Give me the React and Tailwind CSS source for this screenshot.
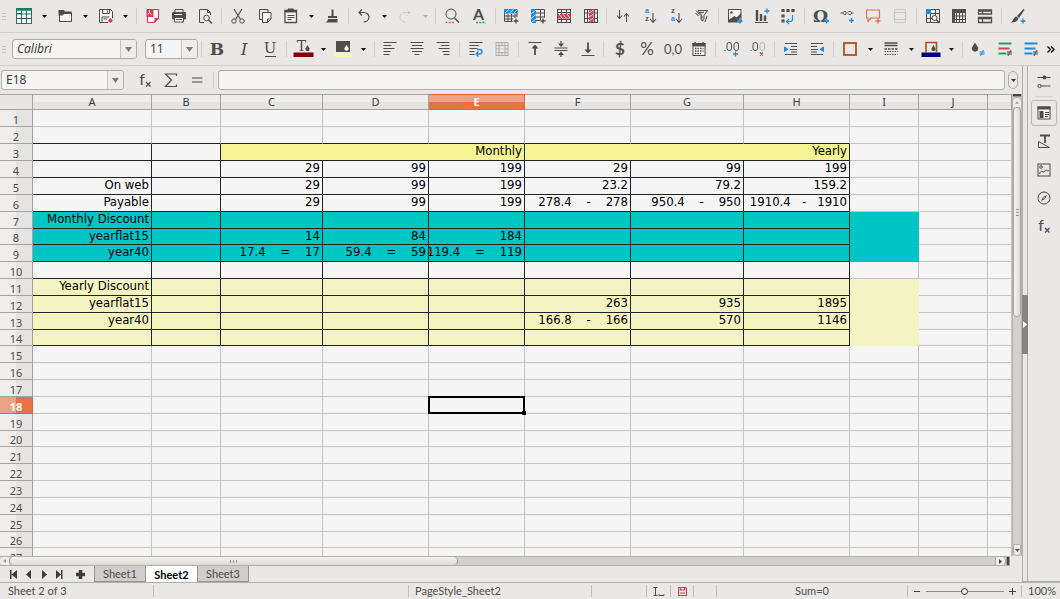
import React from "react";

const DARK = "#4d4d4d";
const BLUE = "#1e8bdf";
const RED = "#da3d52";

const S = ({ children, w = 16, h = 16, box = "0 0 16 16" }) => (
  <svg width={w} height={h} viewBox={box} fill="none" stroke={DARK} strokeWidth="1" className="shrink-0 overflow-visible" aria-hidden="true">
    {children}
  </svg>
);

const Plus = ({ x = 13, y = 13, c = BLUE }) => <path d={`M${x - 2.5} ${y}h5M${x} ${y - 2.5}v5`} stroke={c} strokeWidth="1.3" />;
const Glyph = ({ x = 8, y, size, c = DARK, weight = 400, family = "Lato, sans-serif", italic, children }) => (
  <text x={x} y={y} fontSize={size} fill={c} stroke="none" textAnchor="middle" fontWeight={weight} fontStyle={italic ? "italic" : "normal"} fontFamily={family}>{children}</text>
);
const SERIF = "DejaVu Serif, serif";

const icons = {
  sheet: (
    <>
      <g stroke="#12805c">
        <rect x=".5" y=".5" width="15" height="15" fill="#fff" />
        <path d="M1 1.500h14" strokeWidth="2.500" />
        <path d="M.5 6h15M5.500 3v12M10.500 3v12" strokeWidth="1.200" />
      </g>
      <path d="M1 10.500h14M1 5.500h4" stroke={DARK} />
    </>
  ),
  open: (
    <>
      <path d="M2.500 3.500v10h12v-9" fill="#f4f4f4" />
      <path d="M1.500 5.500V2H7l1 1.500h6.500V6H7L5.500 7.500H1.500z" fill={DARK} stroke="none" />
      <path d="M2.500 6.500v7h12v-8" />
    </>
  ),
  save: (
    <>
      <path d="M1.500 1.500h11l2 2v11h-13z" fill="#f8f8f8" />
      <path d="M4.500 1.500v4h7v-4M4 14v-5h7.500M9.500 2.500v2M5.500 11h4" />
      <circle cx="12.500" cy="12.500" r="2.600" fill={RED} stroke="#f8f8f8" />
    </>
  ),
  pdf: (
    <>
      <path d="M8 1.500h5.500V10l-4 4.500h-7V9" fill="#fff" stroke={RED} strokeWidth="1.200" />
      <path d="M9.500 15v-5h4.500z" fill={RED} stroke="none" />
      <rect x="1.500" y="1" width="7" height="8" fill={RED} stroke="none" />
      <path d="M4.500 2.500v2.500M3 6.500l1.500-2 2 2" stroke="#fff" />
    </>
  ),
  print: (
    <>
      <path d="M4 4V1.500h8V4" />
      <path d="M1.500 4.500h13V11h-2V9h-9v2h-2z" fill={DARK} />
      <path d="M3 6.500h8" stroke="#fff" />
      <path d="M3.500 9.500h9v4.500h-9zM5 11.500h6" fill="#fff" />
    </>
  ),
  preview: (
    <>
      <path d="M13.500 7V4.500l-3-3h-8v13H7M10.500 1.500v3h3" />
      <circle cx="9.500" cy="10" r="2.800" />
      <path d="M11.500 12l3.500 3.500" strokeWidth="1.500" />
    </>
  ),
  cut: (
    <>
      <path d="M4 1l6.500 10.500M12 1L5.500 11.500" strokeWidth="1.200" />
      <circle cx="4" cy="13" r="2.200" />
      <circle cx="12" cy="13" r="2.200" />
    </>
  ),
  copy: (
    <>
      <path d="M11 4V1.500H2.500v10H5" />
      <path d="M5.500 4.500h8.500V11l-3.500 3.500h-5z" fill="#f4f4f4" />
      <path d="M10.500 14.500V11H14" />
    </>
  ),
  paste: (
    <>
      <path d="M2 2.500h11.500v12H2z" fill="#f4f4f4" strokeWidth="1.300" />
      <path d="M1.500 2h12.500v2.500H1.500z" fill={DARK} stroke="none" />
      <path d="M5 1h5.500v2H5z" fill={DARK} />
      <path d="M4.500 7.500h7M4.500 9.500h7M4.500 11.500h4" />
    </>
  ),
  brush: (
    <>
      <path d="M8.500 1.500v6.500" strokeWidth="2" />
      <path d="M4 8h9v2H4zM4 11h9.500v3.500H.500c2 0 3.500-2 3.500-3.500z" fill={DARK} stroke="none" />
    </>
  ),
  undo: <path d="M6 1.500L3 4.500l3 3M3 4.500h4.500c8 0 6.500 9.500 0 9.500" strokeWidth="1.200" />,
  redo: <path d="M10 1.500l3 3-3 3M13 4.500H8.500c-8 0-6.500 9.500 0 9.500" stroke="#c2c1bf" strokeDasharray="2 .6" />,
  find: (
    <>
      <circle cx="7" cy="6" r="5" />
      <path d="M10.500 10l4.500 4.500" strokeWidth="1.500" />
      <path d="M1.500 14.500h9" stroke="#e8604c" strokeWidth="1.500" strokeDasharray="2 1.200" />
    </>
  ),
  spell: (
    <>
      <Glyph x={7.500} y={12} size={16} weight={700}>A</Glyph>
      <path d="M5 14.500h10" stroke="#18a058" strokeWidth="1.500" strokeDasharray="2 1.200" />
    </>
  ),
  rowAdd: (
    <>
      <path d="M1.500 4v9.500h8M1 8h13M5 6v7.500M8.500 6v7.500M12 6v4M1 11h9M14 1v8" />
      <path d="M1 1h13.500v4.500H1z" fill={BLUE} stroke="none" />
      <path d="M2 5l4-3.500M6.500 5l4-3.500M11 5l3.500-3.500" stroke="#cfe6f8" />
      <Plus x={13} y={13} c={DARK} />
    </>
  ),
  colAdd: (
    <>
      <path d="M6 1.500h8.500v8M6 5h8.500M6 9h8.500M6 12.500h4M10.500 1.500v11" />
      <path d="M1 1h5v14H1z" fill={BLUE} stroke="none" />
      <path d="M1 6l5-4M1 10.500l5-4M1 15l5-4" stroke="#cfe6f8" />
      <Plus x={13} y={13} c={DARK} />
    </>
  ),
  rowDel: (
    <>
      <rect x="1.500" y="1.500" width="13" height="13" />
      <path d="M1 4.500h14M1 11.500h14M5.500 1v14M10.500 1v14" />
      <path d="M2 6h12v4.500H2z" fill={RED} stroke="none" />
      <path d="M3 6l3.500 4.500M7 6l3.500 4.500M11 6l3 4" stroke="#fbd5da" />
    </>
  ),
  colDel: (
    <>
      <rect x="1.500" y="1.500" width="13" height="13" />
      <path d="M1 5h14M1 10.500h14M4.500 1v14M11.500 1v14" />
      <path d="M6 2h4.500v12H6z" fill={RED} stroke="none" />
      <path d="M6 5l4.500-3M6 9l4.500-3M6 13l4.500-3" stroke="#fbd5da" />
    </>
  ),
  sort: <path d="M4.500 2v8M2 7.500l2.500 3 2.500-3M11.500 14V5.500M9 8.500l2.500-3 2.500 3" strokeWidth="1.100" />,
  sortAsc: (
    <>
      <Glyph x={5} y={5} size={7} c={BLUE} weight={700} family="Liberation Sans, sans-serif">a</Glyph>
      <Glyph x={5} y={13} size={7} weight={700} family="Liberation Sans, sans-serif">z</Glyph>
      <path d="M11 5v9M8 11l3 3.500 3-3.500" strokeWidth="1.100" />
    </>
  ),
  sortDesc: (
    <>
      <Glyph x={5} y={5} size={7} weight={700} family="Liberation Sans, sans-serif">z</Glyph>
      <Glyph x={5} y={13} size={7} c={BLUE} weight={700} family="Liberation Sans, sans-serif">a</Glyph>
      <path d="M11 5v9M8 11l3 3.500 3-3.500" strokeWidth="1.100" />
    </>
  ),
  filter: (
    <>
      <path d="M4 2.500h9.500L10 7.500v4L8 13V8z" />
      <path d="M2 2.500l5 5v4M1.500 5l3 3M5 4.500h5" />
      <path d="M13 8l-2 6" />
    </>
  ),
  image: (
    <>
      <rect x="1.500" y="1.500" width="12.500" height="12.500" fill="#f4f4f4" />
      <path d="M1.500 14V12l6-4 2 1.500L14 5v4l-4 5z" fill={DARK} stroke="none" />
      <circle cx="4.500" cy="4.500" r="1.200" fill={DARK} stroke="none" />
      <Plus />
    </>
  ),
  chart: (
    <>
      <path d="M3 2v11M7 6v7M11 7.500v5.500" strokeWidth="2.400" />
      <path d="M1 14.500h13" />
      <Plus x={13} y={3} />
    </>
  ),
  pivot: (
    <>
      <path d="M2 1.500h2v2h-2zM7 1.500h2v2h-2zM12 1.500h2v2h-2zM2 7h2v2h-2zM2 12h2v2h-2z" fill="#666" strokeWidth="1.200" />
      <path d="M12.500 7v4c0 1.500-1 2.500-2 2.500H7M9 11l-2.500 2.500L9 16" stroke={BLUE} strokeWidth="1.200" />
    </>
  ),
  omega: (
    <>
      <Glyph x={7.500} y={14} size={17} weight={700} family="DejaVu Serif, serif">Ω</Glyph>
      <Plus x={13.500} y={13} />
    </>
  ),
  link: (
    <>
      <path d="M1.500 5h2M7 3.500H5.500c-2 0-2 3 0 3H7M6.500 5h3M9.500 3.500H11c2 0 2 3 0 3H9.500M12.500 5h2" />
      <Plus x={12.500} y={12.500} />
    </>
  ),
  comment: (
    <>
      <path d="M1.500 2h13v8H6l-3 3.500V10H1.500z" stroke="#ee6a4c" strokeWidth="1.200" />
      <Plus x={13} y={13} c="#ee6a4c" />
    </>
  ),
  header: <path d="M2.500 1.500h11v13h-11zM3 4.500h10M3 11.500h10" stroke="#c9c8c6" />,
  area: (
    <>
      <rect x="1.500" y="1.500" width="13" height="13" />
      <path d="M5.500 1v14M10.500 1v8M1 5.500h14M1 10.500h6" />
      <path d="M1 1h5v5H1z" fill={BLUE} stroke="none" />
      <circle cx="9.500" cy="10" r="2.500" fill="#f4f4f4" />
      <path d="M11.500 12l3 3" strokeWidth="1.400" />
    </>
  ),
  freeze: (
    <>
      <rect x="1.500" y="1.500" width="13" height="13" />
      <path d="M5.500 1v14M8.500 1v14M11.500 1v14M1 8h14M1 11.500h14" />
      <path d="M1 1h14v4H1zM1 1h3v14H1z" fill={DARK} stroke="none" />
    </>
  ),
  split: <path d="M1.500 2h13v4h-13zM1.500 9.500h13v5h-13zM1.500 3h13M1.500 10.500h13M5.500 2v4M5.500 10v4.500" strokeWidth="1.300" />,
  draw: (
    <>
      <path d="M13.500 1L7 8l2 2L14.500 2zM6.500 8.500c-2 .5-3 2-3.500 3.500-.5 1-1.500 2-2.500 2.500 4 .5 7-1 8-4z" fill={DARK} stroke="none" />
      <Plus x={13} y={13} />
    </>
  ),
  bold: <Glyph y={14} size={17} weight={700} family={SERIF}>B</Glyph>,
  italic: <Glyph y={14} size={17} italic family={SERIF}>I</Glyph>,
  underline: (
    <>
      <Glyph y={12} size={15} family={SERIF}>U</Glyph>
      <path d="M3 15.500h11" />
    </>
  ),
  fontColor: (
    <>
      <Glyph x={6.500} y={10} size={14} family={SERIF}>T</Glyph>
      <path d="M12.500 4l2 3.500c.5 3.500-4.500 3.500-4 0z" fill={DARK} stroke="none" />
      <path d="M-1.500 11.500h20v4.500h-20z" fill="#840000" stroke="none" />
    </>
  ),
  highlight: (
    <>
      <path d="M1 0h14v11H1z" fill={DARK} stroke="none" />
      <path d="M11.500 4l2 3c1 3.500-5 3.500-4 0z" fill="#fff" stroke="none" />
      <path d="M-1.500 11.500h19v4.500h-19z" fill="#f3f3c0" stroke="none" />
    </>
  ),
  left: <path d="M1.500 1.500h13M1.500 4.500h8M1.500 7.500h11M1.500 10.500h7M1.500 13.500h6" strokeWidth="1.100" />,
  center: <path d="M1.500 1.500h13M3 4.500h10M1.500 7.500h13M3 10.500h10M5.500 13.500h5" strokeWidth="1.100" />,
  right: <path d="M1.500 1.500h13M6.500 4.500h8M3.500 7.500h11M7.500 10.500h7M8.500 13.500h6" strokeWidth="1.100" />,
  wrap: (
    <>
      <path d="M1.500 1.500h13M1.500 4.500h9M1.500 7.500h8M1.500 10.500h5M1.500 13.500h5" />
      <path d="M9 8.500h2.500c3.500 0 3.500 4.500 0 4.500H9M10.500 10.500L8 13l2.500 2.500" stroke={BLUE} strokeWidth="1.300" />
    </>
  ),
  merge: (
    <g stroke="#b0afad">
      <rect x="2" y="1.500" width="12" height="13" />
      <path d="M2 4.500h12M2 11.500h12M5 1.500v13M11 1.500v13M8 1.500v3M8 11.500v3M2 8h3M11 8h3" />
      <path d="M5.500 8h5" strokeDasharray="1 1" />
    </g>
  ),
  top: <><path d="M1.500 1.500h13" /><path d="M8 14V6" strokeWidth="1.800" /><path d="M4.500 7.500L8 3.500l3.500 4z" fill={DARK} stroke="none" /></>,
  middle: (
    <>
      <path d="M1.500 7h13M1.500 9.500h13M8 0v3M8 16v-3" strokeWidth="1.200" />
      <path d="M5 2.500h6L8 6zM5 14h6l-3-3.500z" fill={DARK} stroke="none" />
    </>
  ),
  bottom: <><path d="M1.500 14.500h13" /><path d="M8 1.500v8" strokeWidth="1.800" /><path d="M4.500 8.500L8 12.500l3.500-4z" fill={DARK} stroke="none" /></>,
  currency: <Glyph y={14} size={17} weight={700}>$</Glyph>,
  percent: <Glyph y={14} size={17}>%</Glyph>,
  number: <Glyph y={13} size={13}>0,0</Glyph>,
  date: (
    <>
      <rect x="2" y="2.500" width="12" height="12" fill="#f8f8f8" />
      <path d="M1.500 2h13v3.500h-13z" fill={DARK} stroke="none" />
      <path d="M4 1v2M12 1v2" strokeWidth="1.500" />
      <path d="M4 7.500h8.500M4 10h8.500M4 12.500h6" strokeWidth="1.500" strokeDasharray="1.500 1" />
    </>
  ),
  addDec: (
    <>
      <rect x="3" y="1.500" width="4.500" height="8" rx="2.200" />
      <rect x="10" y="1.500" width="4.500" height="8" rx="2.200" />
      <path d="M1 9v1" />
      <Plus x={11.500} y={13} />
    </>
  ),
  delDec: (
    <>
      <rect x="3" y="1.500" width="4.500" height="8" rx="2.200" />
      <rect x="10" y="1.500" width="4.500" height="8" rx="2.200" stroke="#b8b7b5" />
      <path d="M1 9v1" />
      <path d="M10 11.500l3 3M13 11.500l-3 3" stroke={RED} strokeWidth="1.200" />
    </>
  ),
  indent: (
    <>
      <path d="M2 2.500h12M8 5.500h6M7 8.500h7M8 11h6M2 13.500h12" strokeWidth="1.200" />
      <path d="M1.500 6v4.500l3.500-2.200z" fill={BLUE} stroke={BLUE} />
    </>
  ),
  outdent: (
    <>
      <path d="M2 2.500h12M2 5.500h6M2 8.500h7M2 11h6M2 13.500h12" strokeWidth="1.200" />
      <path d="M14.500 6v4.500L11 8.300z" fill={BLUE} stroke={BLUE} />
    </>
  ),
  borders: <rect x="2" y="2" width="12" height="12" stroke="#b0511c" strokeWidth="1.800" />,
  lineStyle: (
    <>
      <path d="M1.500 2h13M1.500 4.500h13" strokeWidth="1.300" />
      <path d="M1.500 8h13" strokeWidth="1.300" strokeDasharray="2.500 1" />
      <path d="M1.500 10.500h13M1.500 13.500h13" strokeDasharray="1.500 1" />
    </>
  ),
  lineColor: (
    <>
      <path d="M3 11V1.500h10.500V11" stroke="#b0511c" strokeWidth="1.600" />
      <path d="M10.500 4l2 3.500c.5 3.500-4.500 3.500-4 0z" fill={DARK} stroke="none" />
      <path d="M-1.500 11.500h19v4.500h-19z" fill="#00007c" stroke="none" />
    </>
  ),
  drop: (
    <>
      <path d="M5 1.500l3 5c1.500 5.500-7.500 5.500-6 0z" fill={DARK} stroke="none" />
      <path d="M9.500 11h5M9.500 13h5M13.500 9l-3 6" stroke={BLUE} />
    </>
  ),
  styleRed: (
    <>
      <path d="M1.500 2.500h13" stroke="#1ba462" strokeWidth="2" />
      <path d="M1.500 7.500h11" stroke={RED} strokeWidth="2" />
      <path d="M1.500 12.500h8" stroke="#1ba462" strokeWidth="2" />
      <path d="M10 11h5M10 13h5M14 9l-3 6" />
    </>
  ),
  styleBlue: (
    <>
      <path d="M1.500 2.500h13M1.500 7.500h11M1.500 12.500h8" stroke={BLUE} strokeWidth="2" />
      <path d="M10 11h5M10 13h5M14 9l-3 6" />
    </>
  ),
  settings: (
    <>
      <path d="M1.500 3.500h13M5 12h9.500" />
      <circle cx="8.500" cy="3.500" r="2" fill={DARK} stroke="none" />
      <circle cx="3.500" cy="12" r="1.600" />
    </>
  ),
  props: (
    <>
      <rect x="2" y="2" width="12" height="12" fill="#f8f8f8" />
      <path d="M1.500 1.500h13v3h-13zM3.500 6h4v7h-4z" fill={DARK} stroke="none" />
      <path d="M9 7.500h4M9 9.500h4M9 11.500h3" />
    </>
  ),
  styles: (
    <>
      <path d="M4 1.500h10M9 1.500V9" strokeWidth="1.800" />
      <path d="M2.500 7.500v6h11z" />
    </>
  ),
  gallery: (
    <>
      <rect x="2" y="2" width="12" height="12" />
      <circle cx="5" cy="5" r="1.300" />
      <path d="M3.500 12c1-3 2-3 3.500-2s2-2 3-2 1 1.500 3 .5" />
    </>
  ),
  navigator: (
    <>
      <circle cx="8" cy="8" r="6" />
      <path d="M11 5L9 9l-4 2 2-4z" fill={DARK} stroke="none" />
      <circle cx="8" cy="8" r=".8" fill="#fff" stroke="none" />
    </>
  ),
  fx: (
    <>
      <Glyph x={5} y={13} size={16}>f</Glyph>
      <path d="M9 10l4.500 4.500M13.500 10L9 14.500" strokeWidth="1.200" />
    </>
  ),
  sum: <path d="M13.500 4V2H2.500l6 6-6 6.500h11v-2" strokeWidth="1.200" />,
  equals: <path d="M3 6h10.500M3 10h10.500" strokeWidth="1.100" />,
};

const label = {
  sheet: "New", open: "Open", save: "Save", pdf: "Export as PDF", print: "Print", preview: "Print Preview",
  cut: "Cut", copy: "Copy", paste: "Paste", brush: "Clone Formatting", fx: "Functions", sum: "Sum", equals: "Formula",
};

const IconButton = ({ name }) => (
  <button type="button" aria-label={label[name] || name} className="flex h-6 w-[26px] shrink-0 items-center justify-center">
    <S>{icons[name]}</S>
  </button>
);

const Caret = ({ off }) => (
  <button type="button" aria-label="More options" className="flex h-6 w-[14px] shrink-0 items-center justify-center">
    <svg width="5" height="3" viewBox="0 0 5 3" aria-hidden="true"><path d="M0 0h5L2.500 3z" fill={off ? "#b5b4b2" : "#111"} /></svg>
  </button>
);

const Sep = () => (
  <div className="flex h-4 w-[6px] shrink-0 justify-center"><div className="w-px bg-[#d0cfcd]" /></div>
);

const Items = ({ list }) =>
  list.split(" ").map((n, i) =>
    n === "|" ? <Sep key={i} /> : n === "v" ? <Caret key={i} /> : n === "x" ? <Caret key={i} off /> : <IconButton key={i} name={n} />
  );

const Handle = () => (
  <div className="flex w-[11px] shrink-0 flex-col gap-[2px] pl-[2px]">
    <div className="h-px w-1 bg-[#c4c3c1]" /><div className="h-px w-1 bg-[#c4c3c1]" /><div className="h-px w-1 bg-[#c4c3c1]" />
  </div>
);

const Combo = ({ id, title, value, box, text }) => (
  <div className={`flex h-5 shrink-0 rounded-[3px] border border-[#b1aca6] bg-[#f5f5f4] ${box}`}>
    <label htmlFor={id} className="sr-only">{title}</label>
    <input id={id} defaultValue={value} className={`min-w-0 flex-1 bg-transparent text-[12px] leading-[18px] text-[#3c3c3c] outline-none ${text}`} />
    <button type="button" aria-label={`${title} list`} className="flex w-4 items-center justify-center rounded-r-[2px] border-l border-[#c5c2be] bg-[#eeedeb]">
      <svg width="7" height="5" viewBox="0 0 7 5" aria-hidden="true"><path d="M0 0h7L3.500 5z" fill="#7a7a78" /></svg>
    </button>
  </div>
);

const BLACK_B = "border-b-[#222]";
const BLACK_R = "border-r-[#222]";
const LETTERS = ["A", "B", "C", "D", "E", "F", "G", "H", "I", "J", ""];
const data = {
  4: ["", "", "29", "99", "199", "29", "99", "199"],
  5: ["On web", "", "29", "99", "199", "23.2", "79.2", "159.2"],
  6: ["Payable", "", "29", "99", "199", "278.4    -    278", "950.4    -    950", "1910.4   -   1910"],
  7: ["Monthly Discount"],
  8: ["yearflat15", "", "14", "84", "184"],
  9: ["year40", "", "17.4    =    17", "59.4    =    59", "119.4    =    119"],
  11: ["Yearly Discount"],
  12: ["yearflat15", "", "", "", "", "263", "935", "1895"],
  13: ["year40", "", "", "", "", "166.8    -    166", "570", "1146"],
};
const SHORT_ROWS = [8, 14, 20, 26];

function Cell({ row, col }) {
  const value = (data[row] || [])[col] || "";
  const boxed = row >= 3 && row <= 14 && col <= 7;
  const teal = row >= 7 && row <= 9 && col <= 8;
  const pale = row >= 11 && row <= 14 && col <= 8;
  const bg = teal ? "bg-[#00c5c5]" : pale ? "bg-[#f4f4c3]" : "bg-[#f5f5f5]";
  const filledI = col === 8 && (teal || pale);
  const bottom = boxed || (row === 2 && col <= 7) ? BLACK_B
    : filledI ? (teal ? "border-b-[#00c5c5]" : "border-b-[#f4f4c3]") : "border-b-[#c3c3c3]";
  const right = boxed ? BLACK_R
    : filledI ? (teal ? "border-r-[#00c5c5]" : "border-r-[#f4f4c3]") : "border-r-[#c3c3c3]";
  const clipped = row === 9 && col === 4;
  return (
    <td className={`relative border-r border-b p-0 align-top ${bg} ${bottom} ${right}`}>
      {value && (
        <div className="flex h-[13px] justify-end overflow-x-clip pr-[2px] whitespace-pre">{value}</div>
      )}
      {clipped && (
        <svg width="3" height="5" viewBox="0 0 3 5" className="absolute top-[5px] left-0" aria-hidden="true"><path d="M3 0v5L0 2.500z" fill="#e01010" /></svg>
      )}
      {row === 18 && col === 4 && (
        <div className="absolute -inset-px z-10 border-2 border-black">
          <div className="absolute -right-[3px] -bottom-[3px] size-1 bg-black" />
        </div>
      )}
    </td>
  );
}

const Merged = ({ children }) => (
  <td colSpan={3} className="border-r border-b border-[#222] bg-[#f4f494] p-0 pr-[2px] text-right align-top">{children}</td>
);

const Row = ({ row }) => (
  <tr className={SHORT_ROWS.includes(row) ? "h-4" : "h-[17px]"}>
    <th scope="row" className={`border-r border-b p-0 pt-[2px] text-center font-['Noto_Sans',sans-serif] text-[11px] ${row === 18 ? "border-[#d8693e] bg-linear-to-r from-[#eda288] from-50% to-[#e77244] to-50% font-bold text-white" : "border-[#a3a3a1] bg-linear-to-r from-[#efeeed] from-50% to-[#e5e4e2] to-50% font-normal text-[#4c4c4c]"}`}>
      {row}
    </th>
    {row === 3 ? (
      <>
        <Cell row={3} col={0} />
        <Cell row={3} col={1} />
        <Merged>Monthly</Merged>
        <Merged>Yearly</Merged>
        <Cell row={3} col={8} />
        <Cell row={3} col={9} />
        <Cell row={3} col={10} />
      </>
    ) : (
      LETTERS.map((_, c) => <Cell key={c} row={row} col={c} />)
    )}
  </tr>
);

const Sheet = () => (
  <table className="w-full table-fixed border-separate border-spacing-0 font-['DejaVu_Sans_Condensed','DejaVu_Sans',sans-serif] text-[13px] leading-[13px] text-black">
    <colgroup>
      <col className="w-[33px]" /><col className="w-[119px]" /><col className="w-[69px]" /><col className="w-[102px]" />
      <col className="w-[106px]" /><col className="w-[96px]" /><col className="w-[106px]" /><col className="w-[113px]" />
      <col className="w-[106px]" /><col className="w-[69px]" /><col className="w-[69px]" /><col />
    </colgroup>
    <thead>
      <tr className="h-4 font-['Noto_Sans',sans-serif] text-[11px]">
        <td className="border-t border-r border-b border-[#a3a3a1] bg-[#e8e7e5] p-0" />
        {LETTERS.map((l, i) => (
          <th key={i} scope="col" className={`border-t border-r border-b p-0 text-center leading-[14px] ${l === "E" ? "border-[#d8693e] bg-linear-to-b from-[#eda288] from-50% to-[#e77244] to-50% font-bold text-white" : "border-[#a3a3a1] bg-linear-to-b from-[#efeeed] from-50% to-[#e5e4e2] to-50% font-normal text-[#3c3c3c]"}`}>{l}</th>
        ))}
      </tr>
    </thead>
    <tbody>
      {Array.from({ length: 27 }, (_, i) => <Row key={i} row={i + 1} />)}
    </tbody>
  </table>
);

const VerticalScroll = () => (
  <div className="flex w-[10px] shrink-0 flex-col border-x border-[#b5b3b0] bg-[#d3d1ce]">
    <div className="h-[3px] border-b border-[#999] bg-[#444]" />
    <button type="button" aria-label="Scroll up" className="flex h-[10px] items-center justify-center rounded-t-full border-t border-[#aaa] bg-[#efeeec]">
      <svg width="4" height="3" aria-hidden="true"><path d="M0 3h4L2 0z" fill="#aaa" /></svg>
    </button>
    <div className="flex h-[210px] flex-col items-center justify-center gap-[2px] rounded-full border border-[#a8a6a3] bg-linear-to-r from-[#f5f4f3] to-[#dcdad7]">
      <i className="h-px w-[3px] bg-[#999]" /><i className="h-px w-[3px] bg-[#999]" /><i className="h-px w-[3px] bg-[#999]" />
    </div>
    <div className="flex-1" />
    <button type="button" aria-label="Scroll down" className="flex h-3 items-center justify-center rounded-b-full border border-[#b5b3b0] bg-[#efeeec]">
      <svg width="5" height="3" aria-hidden="true"><path d="M0 0h5L2.500 3z" fill="#555" /></svg>
    </button>
  </div>
);

const HorizontalScroll = () => (
  <div className="mr-3 flex h-[10px] shrink-0 border-y border-[#b1afac] bg-[#d3d1ce]">
    <button type="button" aria-label="Scroll left" className="flex w-[9px] items-center justify-center rounded-l-full bg-[#efeeec]">
      <svg width="3" height="4" aria-hidden="true"><path d="M3 0v4L0 2z" fill="#999" /></svg>
    </button>
    <div className="flex w-[449px] items-center justify-center gap-[2px] rounded-full border-x border-[#999] bg-linear-to-b from-[#f5f4f3] to-[#dcdad7]">
      <i className="h-[3px] w-px bg-[#999]" /><i className="h-[3px] w-px bg-[#999]" /><i className="h-[3px] w-px bg-[#999]" />
    </div>
    <div className="flex-1" />
    <button type="button" aria-label="Scroll right" className="flex w-[11px] items-center justify-center rounded-r-full border-x border-[#aaa] bg-[#efeeec]">
      <svg width="3" height="5" aria-hidden="true"><path d="M0 0v5L3 2.500z" fill="#444" /></svg>
    </button>
    <div className="w-1 border-x border-[#999] bg-[#444]" />
  </div>
);

const NavButton = ({ title, d }) => (
  <button type="button" aria-label={title} className="flex w-[15px] items-center justify-center">
    <svg width="8" height="9" viewBox="0 0 8 8" preserveAspectRatio="none" fill="#3c3c3c" aria-hidden="true"><path d={d} /></svg>
  </button>
);

const Tabs = () => (
  <div className="flex h-4 shrink-0 pl-[6px] font-[Lato,sans-serif] text-[11px] text-[#4c4c4c]">
    <NavButton title="First sheet" d="M0 0h1.500v8H0zM7 0v8L1.500 4z" />
    <NavButton title="Previous sheet" d="M6 0v8L1 4z" />
    <NavButton title="Next sheet" d="M2 0v8l5-4z" />
    <NavButton title="Last sheet" d="M7.500 0H6v8h1.500zM1 0v8l5-4z" />
    <button type="button" aria-label="Add sheet" className="flex w-7 items-center justify-center">
      <svg width="9" height="9" viewBox="0 0 9 9" aria-hidden="true"><path d="M4.500 0v9M0 4.500h9" stroke="#3c3c3c" strokeWidth="3.500" /></svg>
    </button>
    <button type="button" className="w-[52px] border border-t-0 border-[#979593] bg-[#d0cdcb] leading-[15px]">Sheet1</button>
    <button type="button" className="w-[51px] bg-white leading-[15px] font-bold text-black">Sheet2</button>
    <button type="button" className="w-[52px] border border-t-0 border-[#979593] bg-[#d0cdcb] leading-[15px]">Sheet3</button>
  </div>
);

const Bar = () => <div className="h-3 w-px shrink-0 bg-[#c2c0bd]" />;

const StatusBar = () => (
  <footer className="flex h-[17px] shrink-0 items-center border-t border-[#b1afac] font-[Lato,sans-serif] text-[11px] leading-4 text-[#4c4c4c]">
    <div className="w-[153px] pl-2">Sheet 2 of 3</div>
    <Bar />
    <div className="w-[254px]" />
    <Bar />
    <div className="w-[182px] pl-[6px]">PageStyle_Sheet2</div>
    <Bar />
    <div className="w-[54px]" />
    <Bar />
    <div className="flex w-[23px] justify-center">
      <svg width="12" height="9" viewBox="0 0 12 9" fill="none" stroke="#4d4d4d" aria-hidden="true"><path d="M.5 .5h4M.5 8.500h4M2.500 .5v8M6 7v1.500h5V7" /></svg>
    </div>
    <Bar />
    <div className="flex w-[22px] justify-center">
      <svg width="9" height="9" viewBox="0 0 9 9" fill="none" stroke="#da3d52" aria-hidden="true"><path d="M.5 .5h7l1 1v7h-8zM2.500 .5v2.500h4V.5M2 6h5" strokeWidth="1.200" /></svg>
    </div>
    <Bar />
    <div className="w-[22px]" />
    <Bar />
    <div className="flex-1 text-center">Sum=0</div>
    <Bar />
    <div className="flex w-[113px] items-center justify-center gap-1">
      <button type="button" aria-label="Zoom out" className="flex size-[10px] items-center justify-center"><i className="h-px w-[6px] bg-[#444]" /></button>
      <input type="range" aria-label="Zoom" min="0" max="100" defaultValue="50" className="h-2 w-[78px] appearance-none bg-transparent [&::-webkit-slider-runnable-track]:h-px [&::-webkit-slider-runnable-track]:bg-[#8d8b88] [&::-webkit-slider-thumb]:-mt-[3px] [&::-webkit-slider-thumb]:size-[7px] [&::-webkit-slider-thumb]:appearance-none [&::-webkit-slider-thumb]:rounded-full [&::-webkit-slider-thumb]:border [&::-webkit-slider-thumb]:border-[#333] [&::-webkit-slider-thumb]:bg-[#f4f4f4]" />
      <button type="button" aria-label="Zoom in" className="flex size-[10px] items-center justify-center">
        <svg width="7" height="7" viewBox="0 0 7 7" stroke="#444" aria-hidden="true"><path d="M0 3.500h7M3.500 0v7" /></svg>
      </button>
    </div>
    <Bar />
    <div className="w-[38px] pl-[6px]">100%</div>
  </footer>
);

const Sidebar = () => (
  <>
    <div className="flex w-[6px] shrink-0 flex-col border-x border-b border-[#b1afac]">
      <div className="flex-[227]" />
      <button type="button" aria-label="Hide sidebar" className="-mx-px flex h-[59px] items-center justify-center bg-[#868584]">
        <svg width="4" height="7" aria-hidden="true"><path d="M0 0v7L4 3.500z" fill="#fff" /></svg>
      </button>
      <div className="flex-[226]" />
    </div>
    <aside className="flex w-8 shrink-0 flex-col items-center border-b border-[#b1afac] pt-[2px]">
      <div className="flex h-7 items-center"><IconButton name="settings" /></div>
      <div className="mb-[3px] h-px w-[18px] bg-[#d4d3d1]" />
      <div className="mb-[2px] flex h-[26px] items-center justify-center rounded-[3px] border border-[#b8b6b3]"><div className="flex w-6 justify-center"><IconButton name="props" /></div></div>
      <div className="flex h-7 items-center"><IconButton name="styles" /></div>
      <div className="flex h-7 items-center"><IconButton name="gallery" /></div>
      <div className="flex h-7 items-center"><IconButton name="navigator" /></div>
      <div className="flex h-7 items-center"><IconButton name="fx" /></div>
    </aside>
  </>
);

export default function App() {
  return (
    <div className="flex h-screen flex-col overflow-hidden bg-[#e9e8e6] font-['Noto_Sans',sans-serif]">
      <div className="flex h-[33px] shrink-0 items-center border-b border-[#d0cfcd]">
        <Handle />
        <div className="flex flex-1 items-center justify-between pr-[29px]">
          <Items list="sheet v open v save v | pdf print preview | cut copy paste v brush | undo v redo x | find spell | rowAdd colAdd rowDel colDel | sort sortAsc sortDesc filter | image chart pivot | omega link comment header | area freeze split | draw" />
        </div>
      </div>
      <div className="flex h-[33px] shrink-0 items-center border-b border-[#d0cfcd]">
        <Handle />
        <div className="flex shrink-0 gap-2 pl-px">
          <Combo id="font-name" title="Font name" value="Calibri" box="w-[125px]" text="pl-1 italic" />
          <Combo id="font-size" title="Font size" value="11" box="w-[53px]" text="pl-1" />
        </div>
        <div className="flex flex-1 items-center justify-between pr-px">
          <Items list="| bold italic underline | fontColor v highlight v | left center right | wrap merge | top middle bottom | currency percent number date | addDec delDec | indent outdent | borders v lineStyle v lineColor v | drop styleRed styleBlue" />
          <button type="button" aria-label="More tools" className="flex w-[14px] items-center justify-center">
            <svg width="8" height="7" viewBox="0 0 8 7" fill="none" stroke="#111" strokeWidth="1.300" aria-hidden="true"><path d="M.5 .5l3 3-3 3M4 .5l3 3-3 3" /></svg>
          </button>
        </div>
      </div>
      <div className="flex min-h-0 flex-1">
        <main className="flex min-w-0 flex-1 flex-col">
          <div className="flex h-7 shrink-0 items-center pl-px">
            <Combo id="name-box" title="Name box" value="E18" box="w-[123px]" text="pl-1" />
            <div className="flex flex-1 items-center pl-2">
              <IconButton name="fx" />
              <IconButton name="sum" />
              <IconButton name="equals" />
              <Sep />
              <input aria-label="Formula" className="ml-[2px] h-5 min-w-0 flex-1 rounded-[3px] border border-[#b1aca6] bg-[#f5f5f4] px-1 text-[12px] outline-none" />
              <button type="button" aria-label="Expand formula bar" className="mr-1 ml-[3px] flex h-[18px] w-[10px] items-center justify-center rounded-full border border-[#b1aca6]">
                <svg width="5" height="3" aria-hidden="true"><path d="M0 0h5L2.500 3z" fill="#333" /></svg>
              </button>
            </div>
          </div>
          <div className="flex min-h-0 flex-1">
            <div className="min-w-0 flex-1 overflow-hidden bg-[#f5f5f5]"><Sheet /></div>
            <VerticalScroll />
          </div>
          <HorizontalScroll />
          <Tabs />
        </main>
        <Sidebar />
      </div>
      <StatusBar />
    </div>
  );
}
